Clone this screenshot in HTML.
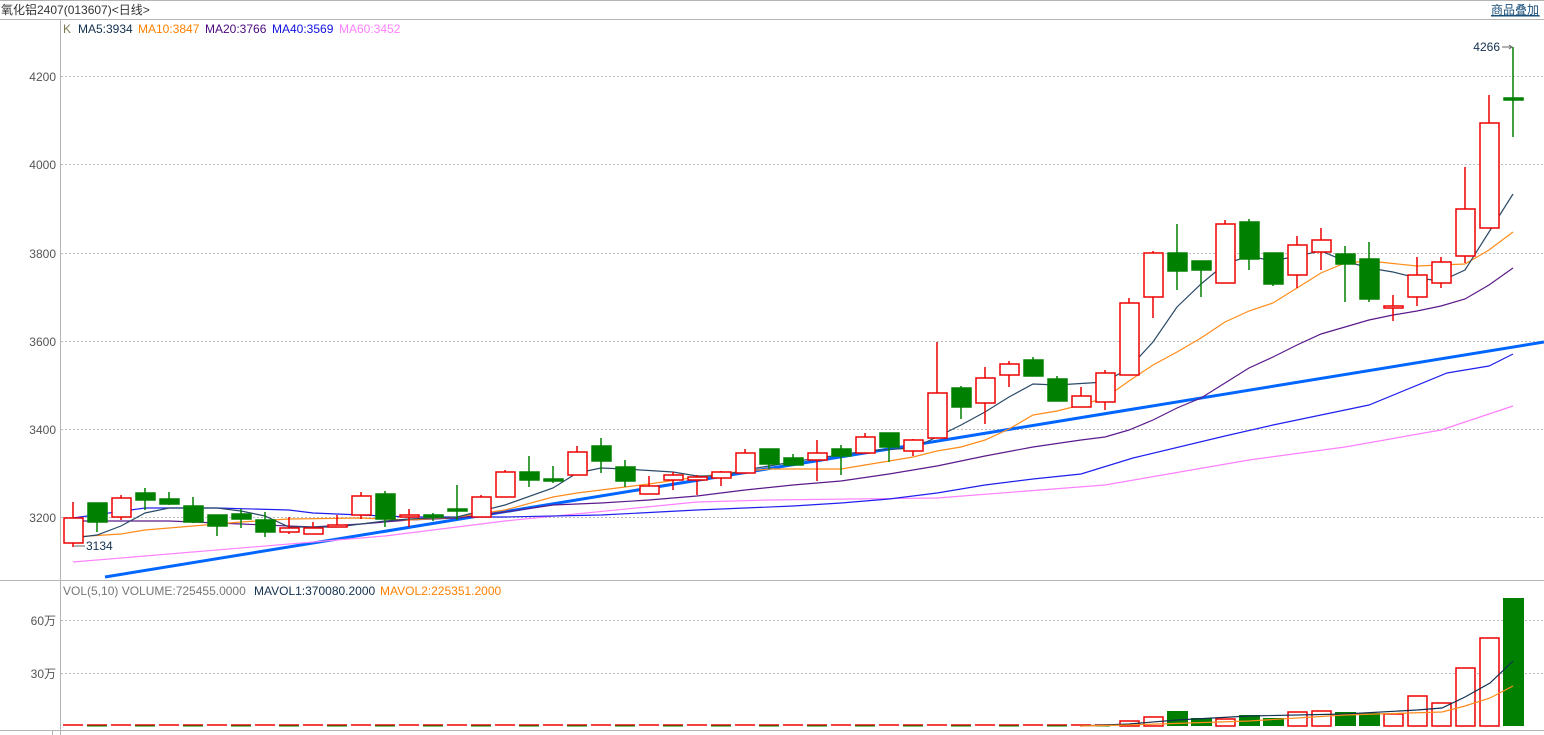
<!DOCTYPE html>
<html><head><meta charset="utf-8"><style>
html,body{margin:0;padding:0;background:#fff;width:1544px;height:735px;overflow:hidden;font-family:"Liberation Sans","Noto Sans CJK SC",sans-serif}
</style></head><body>
<svg width="1544" height="735" xmlns="http://www.w3.org/2000/svg" style="position:absolute;left:0;top:0;font-family:'Liberation Sans','Noto Sans CJK SC',sans-serif">
<line x1="0" y1="0.5" x2="1544" y2="0.5" stroke="#b4b4b4"/>
<line x1="0" y1="19.5" x2="1544" y2="19.5" stroke="#b4b4b4"/>
<text x="1" y="14" font-size="12" fill="#333">氧化铝2407(013607)&lt;日线&gt;</text>
<text x="1491" y="14" font-size="12" fill="#1a4f7a" text-decoration="underline">商品叠加</text>
<line x1="1491" y1="16" x2="1540" y2="16" stroke="#1a4f7a"/>
<line x1="60.5" y1="20" x2="60.5" y2="735" stroke="#b4b4b4"/>
<line x1="0" y1="580.5" x2="1544" y2="580.5" stroke="#b4b4b4"/>
<line x1="0" y1="730.5" x2="1544" y2="730.5" stroke="#b4b4b4"/>
<line x1="52.5" y1="730" x2="52.5" y2="735" stroke="#b4b4b4"/>
<g font-size="12"><text x="63" y="33" fill="#7a7a50">K</text><text x="78" y="33" fill="#12304f">MA5:3934</text><text x="138" y="33" fill="#ff8000">MA10:3847</text><text x="205" y="33" fill="#4b0a7d">MA20:3766</text><text x="272" y="33" fill="#1010e0">MA40:3569</text><text x="339" y="33" fill="#ff80ff">MA60:3452</text></g>
<g font-size="12"><text x="63" y="595" fill="#777">VOL(5,10) VOLUME:725455.0000</text><text x="254" y="595" fill="#12304f">MAVOL1:370080.2000</text><text x="380" y="595" fill="#ff8000">MAVOL2:225351.2000</text></g>
<g stroke="#bbb" stroke-dasharray="2,2"><line x1="61" y1="76.5" x2="1544" y2="76.5"/><line x1="61" y1="164.5" x2="1544" y2="164.5"/><line x1="61" y1="253.5" x2="1544" y2="253.5"/><line x1="61" y1="341.5" x2="1544" y2="341.5"/><line x1="61" y1="429.5" x2="1544" y2="429.5"/><line x1="61" y1="517.5" x2="1544" y2="517.5"/><line x1="61" y1="620.5" x2="1544" y2="620.5"/><line x1="61" y1="673.5" x2="1544" y2="673.5"/></g>
<g font-size="12" fill="#555" text-anchor="end"><text x="56" y="81">4200</text><text x="56" y="169">4000</text><text x="56" y="258">3800</text><text x="56" y="346">3600</text><text x="56" y="434">3400</text><text x="56" y="522">3200</text><text x="56" y="625">60万</text><text x="56" y="678">30万</text></g>
<line x1="105" y1="577" x2="1544" y2="342" stroke="#0066ff" stroke-width="3"/>
<g fill="none" stroke-width="1.2">
<polyline stroke="#ff80ff" points="73,562 385,536 505,521 697,502 769,500 937,498 1105,485 1249,460 1345,447 1441,430 1513,406"/>
<polyline stroke="#2020ee" points="73,518 145,508 217,508 289,510 313,513 361,515 409,517 505,517 601,515 697,510 745,508 793,506 841,503 889,499 937,493 985,485 1033,479 1081,474 1133,458 1225,436 1273,425 1321,415 1369,405 1447,373 1489,366 1513,354"/>
<polyline stroke="#5a1a8c" points="73,521 169,521 241,524 313,527 361,524 409,520 457,518 505,512 553,505 601,503 649,500 697,496 745,490 793,485 841,481 889,474 937,466 985,456 1033,447 1081,440 1105,437 1129,430 1153,420 1177,408 1201,398 1225,383 1249,368 1273,357 1297,345 1321,334 1345,327 1369,320 1393,315 1417,311 1441,306 1465,299 1489,285 1513,268"/>
<polyline stroke="#ff8c1a" points="73,537 121,534 145,530 193,526 241,522 289,519 361,518 409,520 457,517 505,510 553,497 577,493 601,490 649,484 697,477 745,471 769,469 841,469 865,465 913,457 937,451 961,447 985,440 1009,429 1033,415 1057,411 1081,405 1105,398 1129,381 1153,365 1177,352 1201,338 1225,322 1249,311 1273,303 1297,288 1321,273 1345,263 1369,261 1417,266 1465,264 1489,250 1513,232"/>
<polyline stroke="#2a4a68" points="73,538 97,535 121,526 145,513 169,508 217,508 241,511 265,516 289,527 337,527 361,524 385,521 409,519 457,517 481,511 505,505 553,488 577,473 601,468 625,469 673,472 697,476 721,476 745,470 769,466 793,462 817,458 841,455 865,451 913,448 937,437 961,425 985,412 1009,397 1033,384 1057,385 1105,382 1129,368 1153,342 1177,307 1201,284 1225,264 1249,256 1273,261 1297,256 1321,251 1345,261 1369,268 1393,272 1417,278 1441,281 1465,270 1489,232 1513,194"/>
</g>
<g stroke-width="1.5">
<g stroke="#ee0000" fill="#fff">
<line x1="73" y1="502" x2="73" y2="547"/><rect x="64" y="518" width="19" height="25"/>
<line x1="121" y1="495" x2="121" y2="520"/><rect x="112" y="498" width="19" height="19"/>
<line x1="289" y1="517" x2="289" y2="534"/><rect x="280" y="528" width="19" height="4"/>
<line x1="313" y1="522" x2="313" y2="534"/><rect x="304" y="528" width="19" height="6"/>
<line x1="337" y1="515" x2="337" y2="527"/><rect x="328" y="525" width="19" height="2"/>
<line x1="361" y1="492" x2="361" y2="519"/><rect x="352" y="496" width="19" height="19"/>
<line x1="409" y1="509" x2="409" y2="527"/><rect x="400" y="515" width="19" height="2"/>
<line x1="481" y1="495" x2="481" y2="517"/><rect x="472" y="497" width="19" height="20"/>
<line x1="505" y1="470" x2="505" y2="497"/><rect x="496" y="472" width="19" height="25"/>
<line x1="577" y1="446" x2="577" y2="475"/><rect x="568" y="452" width="19" height="23"/>
<line x1="649" y1="476" x2="649" y2="494"/><rect x="640" y="486" width="19" height="8"/>
<line x1="673" y1="472" x2="673" y2="490"/><rect x="664" y="475" width="19" height="5"/>
<line x1="697" y1="475" x2="697" y2="495"/><rect x="688" y="477" width="19" height="3"/>
<line x1="721" y1="471" x2="721" y2="486"/><rect x="712" y="472" width="19" height="6"/>
<line x1="745" y1="449" x2="745" y2="473"/><rect x="736" y="453" width="19" height="20"/>
<line x1="817" y1="440" x2="817" y2="481"/><rect x="808" y="453" width="19" height="7"/>
<line x1="865" y1="433" x2="865" y2="453"/><rect x="856" y="437" width="19" height="16"/>
<line x1="913" y1="439" x2="913" y2="456"/><rect x="904" y="440" width="19" height="11"/>
<line x1="937" y1="342" x2="937" y2="438"/><rect x="928" y="393" width="19" height="45"/>
<line x1="985" y1="367" x2="985" y2="424"/><rect x="976" y="378" width="19" height="25"/>
<line x1="1009" y1="361" x2="1009" y2="387"/><rect x="1000" y="364" width="19" height="11"/>
<line x1="1081" y1="387" x2="1081" y2="407"/><rect x="1072" y="396" width="19" height="11"/>
<line x1="1105" y1="370" x2="1105" y2="410"/><rect x="1096" y="373" width="19" height="29"/>
<line x1="1129" y1="298" x2="1129" y2="375"/><rect x="1120" y="303" width="19" height="72"/>
<line x1="1153" y1="251" x2="1153" y2="318"/><rect x="1144" y="253" width="19" height="44"/>
<line x1="1225" y1="220" x2="1225" y2="283"/><rect x="1216" y="224" width="19" height="59"/>
<line x1="1297" y1="236" x2="1297" y2="288"/><rect x="1288" y="245" width="19" height="30"/>
<line x1="1321" y1="228" x2="1321" y2="270"/><rect x="1312" y="240" width="19" height="12"/>
<line x1="1393" y1="295" x2="1393" y2="321"/><rect x="1384" y="306" width="19" height="2"/>
<line x1="1417" y1="257" x2="1417" y2="306"/><rect x="1408" y="275" width="19" height="22"/>
<line x1="1441" y1="257" x2="1441" y2="288"/><rect x="1432" y="262" width="19" height="21"/>
<line x1="1465" y1="167" x2="1465" y2="263"/><rect x="1456" y="209" width="19" height="47"/>
<line x1="1489" y1="95" x2="1489" y2="228"/><rect x="1480" y="123" width="19" height="105"/>
</g>
<g stroke="#008000" fill="#008000">
<line x1="97" y1="503" x2="97" y2="532"/><rect x="88" y="503" width="19" height="19"/>
<line x1="145" y1="488" x2="145" y2="510"/><rect x="136" y="493" width="19" height="7"/>
<line x1="169" y1="492" x2="169" y2="505"/><rect x="160" y="499" width="19" height="5"/>
<line x1="193" y1="497" x2="193" y2="523"/><rect x="184" y="506" width="19" height="16"/>
<line x1="217" y1="515" x2="217" y2="536"/><rect x="208" y="515" width="19" height="11"/>
<line x1="241" y1="509" x2="241" y2="528"/><rect x="232" y="514" width="19" height="5"/>
<line x1="265" y1="512" x2="265" y2="537"/><rect x="256" y="520" width="19" height="12"/>
<line x1="385" y1="491" x2="385" y2="527"/><rect x="376" y="494" width="19" height="25"/>
<line x1="433" y1="513" x2="433" y2="521"/><rect x="424" y="515" width="19" height="2"/>
<line x1="457" y1="485" x2="457" y2="520"/><rect x="448" y="509" width="19" height="2"/>
<line x1="529" y1="456" x2="529" y2="487"/><rect x="520" y="472" width="19" height="8"/>
<line x1="553" y1="466" x2="553" y2="483"/><rect x="544" y="479" width="19" height="2"/>
<line x1="601" y1="438" x2="601" y2="473"/><rect x="592" y="446" width="19" height="15"/>
<line x1="625" y1="460" x2="625" y2="487"/><rect x="616" y="467" width="19" height="14"/>
<line x1="769" y1="449" x2="769" y2="469"/><rect x="760" y="449" width="19" height="15"/>
<line x1="793" y1="454" x2="793" y2="465"/><rect x="784" y="458" width="19" height="7"/>
<line x1="841" y1="445" x2="841" y2="475"/><rect x="832" y="449" width="19" height="7"/>
<line x1="889" y1="433" x2="889" y2="462"/><rect x="880" y="433" width="19" height="14"/>
<line x1="961" y1="386" x2="961" y2="419"/><rect x="952" y="388" width="19" height="19"/>
<line x1="1033" y1="357" x2="1033" y2="376"/><rect x="1024" y="360" width="19" height="16"/>
<line x1="1057" y1="376" x2="1057" y2="401"/><rect x="1048" y="379" width="19" height="22"/>
<line x1="1177" y1="224" x2="1177" y2="290"/><rect x="1168" y="253" width="19" height="18"/>
<line x1="1201" y1="261" x2="1201" y2="297"/><rect x="1192" y="261" width="19" height="9"/>
<line x1="1249" y1="219" x2="1249" y2="270"/><rect x="1240" y="222" width="19" height="37"/>
<line x1="1273" y1="253" x2="1273" y2="286"/><rect x="1264" y="253" width="19" height="31"/>
<line x1="1345" y1="246" x2="1345" y2="302"/><rect x="1336" y="254" width="19" height="10"/>
<line x1="1369" y1="242" x2="1369" y2="302"/><rect x="1360" y="259" width="19" height="40"/>
<line x1="1513" y1="47" x2="1513" y2="137"/><rect x="1504" y="98" width="19" height="2"/>
</g>
</g>
<text x="86" y="550" font-size="12" fill="#12304f">3134</text>
<line x1="74" y1="546" x2="85" y2="546" stroke="#666"/>
<text x="1500" y="51" font-size="12" fill="#12304f" text-anchor="end">4266</text>
<line x1="1502" y1="47" x2="1512" y2="47" stroke="#666"/><path d="M1509,45 L1512,47 L1509,49" fill="none" stroke="#666"/>
<!-- volume baseline tiny bars -->
<line x1="63" y1="725" x2="1110" y2="725" stroke="#ee0000" stroke-width="1.5" stroke-dasharray="20,4"/>
<line x1="87" y1="726" x2="1110" y2="726" stroke="#008000" stroke-width="1" stroke-dasharray="20,28"/>
<g stroke-width="1.5">
<g stroke="#ee0000" fill="#fff">
<rect x="1120" y="721" width="19" height="5"/><rect x="1144" y="717" width="19" height="9"/><rect x="1216" y="719" width="19" height="7"/><rect x="1288" y="712" width="19" height="14"/><rect x="1312" y="711" width="19" height="15"/><rect x="1384" y="714" width="19" height="12"/><rect x="1408" y="696" width="19" height="30"/><rect x="1432" y="703" width="19" height="23"/><rect x="1456" y="668" width="19" height="58"/><rect x="1480" y="638" width="19" height="88"/>
</g>
<g fill="#008000" stroke="none">
<rect x="1167" y="711" width="21" height="15"/><rect x="1191" y="718" width="21" height="8"/><rect x="1239" y="715" width="21" height="11"/><rect x="1263" y="718" width="21" height="8"/><rect x="1335" y="712" width="21" height="14"/><rect x="1359" y="713" width="21" height="13"/><rect x="1503" y="598" width="21" height="128"/>
</g>
</g>
<polyline fill="none" stroke="#12304f" stroke-width="1.2" points="1080,726 1129,724 1177,720 1249,716 1345,714 1417,710 1442,708 1465,697 1490,683 1513,661"/>
<polyline fill="none" stroke="#ff8c1a" stroke-width="1.2" points="1080,726 1129,725 1249,721 1345,715 1442,712 1465,706 1490,698 1513,686"/>
</svg>
</body></html>
